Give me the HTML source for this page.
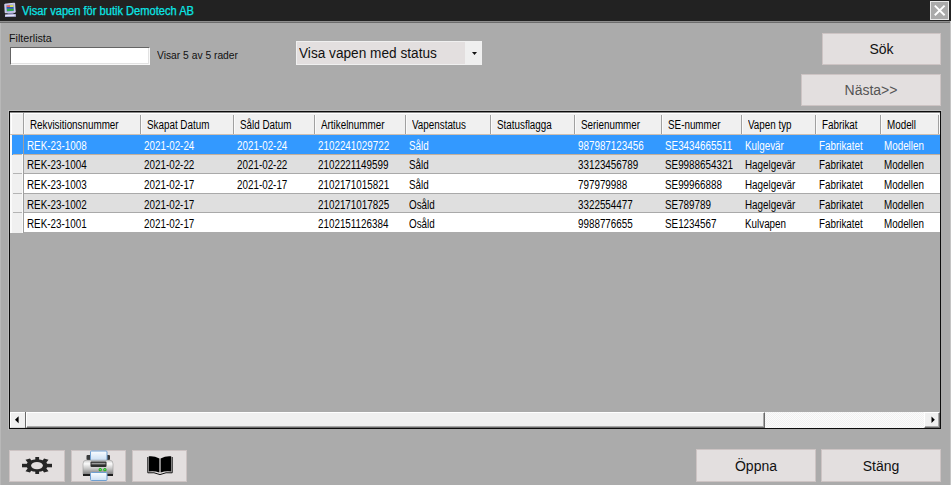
<!DOCTYPE html>
<html><head><meta charset="utf-8">
<style>
*{box-sizing:border-box;margin:0;padding:0}
html,body{width:951px;height:485px;overflow:hidden;background:#ababab;font-family:"Liberation Sans",sans-serif;position:relative}
.a{position:absolute}
.t{position:absolute;white-space:nowrap;transform-origin:0 0}
.lbl{font-size:11px;color:#111}
.btn{position:absolute;background:#e3dfdf;border:1px solid #cdc4c4}
.bt{position:absolute;left:0;width:100%;text-align:center;font-size:14px;color:#111;white-space:nowrap}
.c{position:absolute;white-space:nowrap;font-size:12px;color:#000;transform:scaleX(.82);transform-origin:0 0}
</style></head><body>

<div class="a" style="left:0;top:0;width:951px;height:21px;background:#222"></div>
<div class="a" style="left:0;top:21px;width:951px;height:1px;background:#8e8e8e"></div>
<div class="a" style="left:0;top:22px;width:951px;height:1px;background:#6c6c6c"></div>
<div class="a" style="left:0;top:23px;width:1px;height:462px;background:#b8b8b8"></div>
<div class="a" style="left:950px;top:21px;width:1px;height:464px;background:#c4c4c4"></div>
<svg class="a" style="left:0;top:0" width="22" height="20" viewBox="0 0 22 20">
<path d="M4.8 4.2 L14.6 3.2 L15.2 12.2 L5.2 12.8 Z" fill="#b4b4e6" stroke="#e6e6ff" stroke-width="0.9"/>
<clipPath id="scr"><path d="M6.6 5.6 L13.2 5 L13.7 10.8 L7 11.2 Z"/></clipPath>
<g clip-path="url(#scr)">
<rect x="5" y="4" width="10" height="8" fill="#49c"/>
<rect x="5" y="4" width="5" height="3" fill="#e65"/>
<rect x="10" y="4" width="5" height="3" fill="#dd5"/>
<rect x="5" y="7" width="10" height="1.8" fill="#35b"/>
<rect x="5" y="8.8" width="10" height="3" fill="#3a4"/>
</g>
<rect x="7.5" y="12.8" width="6" height="1.6" fill="#8080b0"/>
<path d="M5 14.4 L15.8 14 L16 16.8 L5 17 Z" fill="#b8b8e0"/>
<rect x="5.5" y="14.8" width="9" height="1" fill="#f0f0ff"/>
</svg>
<div class="t" style="left:22px;top:4px;font-size:12px;color:#0ae6e6;transform:scaleX(.925);-webkit-text-stroke:0.25px #0ae6e6">Visar vapen för butik Demotech AB</div>
<div class="a" style="left:930px;top:1px;width:19px;height:19px;border:1px solid #e8e8e8;background:#aaaaaa"></div>
<svg class="a" style="left:930px;top:1px" width="20" height="20"><path d="M4.8 4.6 L14.6 14.2 M14.6 4.6 L4.8 14.2" stroke="#fff" stroke-width="1.9"/></svg>
<div class="t lbl" style="left:9px;top:32px;font-size:11.5px;transform:scaleX(.93)">Filterlista</div>
<div class="a" style="left:10px;top:47px;width:140px;height:18px;background:#fff;border-top:1px solid #646464;border-left:1px solid #646464;border-right:1px solid #f8f8f8;border-bottom:1px solid #f8f8f8;box-shadow:inset -1px -1px 0 #e2e2e2"></div>
<div class="t lbl" style="left:157px;top:49px;transform:scaleX(.935)">Visar 5 av 5 rader</div>
<div class="a" style="left:296px;top:41px;width:186px;height:24px;background:#e3dfdf;border:1px solid #f0f0f0"></div>
<div class="a" style="left:465px;top:42px;width:16px;height:22px;background:#efefef"></div>
<div class="t" style="left:299px;top:45px;font-size:14px;color:#111;transform:scaleX(.975)">Visa vapen med status</div>
<svg class="a" style="left:472px;top:52px" width="6" height="4"><path d="M0 0 L5 0 L2.5 3 Z" fill="#111"/></svg>
<div class="btn" style="left:822px;top:33px;width:119px;height:32px"><div class="bt" style="top:7px">Sök</div></div>
<div class="btn" style="left:801px;top:74px;width:140px;height:32px"><div class="bt" style="top:7px;color:#555">Nästa&gt;&gt;</div></div>
<div class="a" style="left:9px;top:111px;width:932px;height:318px;border:1px solid #0c0c0c;background:#ababab"></div>
<div class="a" style="left:8px;top:110px;width:934px;height:1px;background:#bdbdbd"></div>
<div class="a" style="left:8px;top:110px;width:1px;height:320px;background:#bdbdbd"></div>
<div class="a" style="left:10px;top:112px;width:930px;height:22px;background:#f0f0f0"></div>
<div class="a" style="left:10px;top:112px;width:930px;height:1px;background:#8a8a8a"></div>
<div class="a" style="left:10px;top:113px;width:929px;height:1px;background:#ffffff"></div>
<div class="a" style="left:11px;top:113px;width:1px;height:21px;background:#ffffff"></div>
<div class="a" style="left:10px;top:134px;width:930px;height:1px;background:#cdbfb2"></div>
<div class="a" style="left:23px;top:113px;width:1px;height:21px;background:#a0a0a0"></div>
<div class="a" style="left:24px;top:113px;width:1px;height:21px;background:#fafafa"></div>
<div class="a" style="left:140px;top:115px;width:1px;height:19px;background:#a0a0a0"></div>
<div class="a" style="left:141px;top:115px;width:1px;height:19px;background:#fafafa"></div>
<div class="a" style="left:233px;top:115px;width:1px;height:19px;background:#a0a0a0"></div>
<div class="a" style="left:234px;top:115px;width:1px;height:19px;background:#fafafa"></div>
<div class="a" style="left:314px;top:115px;width:1px;height:19px;background:#a0a0a0"></div>
<div class="a" style="left:315px;top:115px;width:1px;height:19px;background:#fafafa"></div>
<div class="a" style="left:405px;top:115px;width:1px;height:19px;background:#a0a0a0"></div>
<div class="a" style="left:406px;top:115px;width:1px;height:19px;background:#fafafa"></div>
<div class="a" style="left:490px;top:115px;width:1px;height:19px;background:#a0a0a0"></div>
<div class="a" style="left:491px;top:115px;width:1px;height:19px;background:#fafafa"></div>
<div class="a" style="left:574px;top:115px;width:1px;height:19px;background:#a0a0a0"></div>
<div class="a" style="left:575px;top:115px;width:1px;height:19px;background:#fafafa"></div>
<div class="a" style="left:661px;top:115px;width:1px;height:19px;background:#a0a0a0"></div>
<div class="a" style="left:662px;top:115px;width:1px;height:19px;background:#fafafa"></div>
<div class="a" style="left:741px;top:115px;width:1px;height:19px;background:#a0a0a0"></div>
<div class="a" style="left:742px;top:115px;width:1px;height:19px;background:#fafafa"></div>
<div class="a" style="left:815px;top:115px;width:1px;height:19px;background:#a0a0a0"></div>
<div class="a" style="left:816px;top:115px;width:1px;height:19px;background:#fafafa"></div>
<div class="a" style="left:880px;top:115px;width:1px;height:19px;background:#a0a0a0"></div>
<div class="a" style="left:881px;top:115px;width:1px;height:19px;background:#fafafa"></div>
<div class="a" style="left:938px;top:115px;width:1px;height:19px;background:#a0a0a0"></div>
<div class="a" style="left:939px;top:115px;width:1px;height:19px;background:#fafafa"></div>
<div class="c" style="left:30px;top:118px">Rekvisitionsnummer</div>
<div class="c" style="left:147px;top:118px">Skapat Datum</div>
<div class="c" style="left:240px;top:118px">Såld Datum</div>
<div class="c" style="left:321px;top:118px">Artikelnummer</div>
<div class="c" style="left:412px;top:118px">Vapenstatus</div>
<div class="c" style="left:497px;top:118px">Statusflagga</div>
<div class="c" style="left:581px;top:118px">Serienummer</div>
<div class="c" style="left:668px;top:118px">SE-nummer</div>
<div class="c" style="left:748px;top:118px">Vapen typ</div>
<div class="c" style="left:822px;top:118px">Fabrikat</div>
<div class="c" style="left:887px;top:118px">Modell</div>
<div class="a" style="left:10px;top:135px;width:13px;height:20px;background:#fafafa"></div>
<div class="a" style="left:12px;top:135px;width:10px;height:20px;background:#3399ff"></div>
<div class="a" style="left:22px;top:135px;width:1px;height:19px;background:#3399ff"></div>
<div class="a" style="left:24px;top:135px;width:916px;height:19px;background:#3399ff"></div>
<div class="a" style="left:24px;top:154px;width:916px;height:1px;background:#c2b09e"></div>
<div class="a" style="left:13px;top:154px;width:9px;height:1px;background:#c8b8a8"></div>
<div class="a" style="left:23px;top:135px;width:1px;height:20px;background:#a0a0a0"></div>
<div class="c" style="left:27px;top:139px;color:#fff">REK-23-1008</div>
<div class="c" style="left:144px;top:139px;color:#fff">2021-02-24</div>
<div class="c" style="left:237px;top:139px;color:#fff">2021-02-24</div>
<div class="c" style="left:318px;top:139px;color:#fff">2102241029722</div>
<div class="c" style="left:409px;top:139px;color:#fff">Såld</div>
<div class="c" style="left:578px;top:139px;color:#fff">987987123456</div>
<div class="c" style="left:665px;top:139px;color:#fff">SE3434665511</div>
<div class="c" style="left:745px;top:139px;color:#fff">Kulgevär</div>
<div class="c" style="left:819px;top:139px;color:#fff">Fabrikatet</div>
<div class="c" style="left:884px;top:139px;color:#fff">Modellen</div>
<div class="a" style="left:10px;top:155px;width:13px;height:19px;background:#fafafa"></div>
<div class="a" style="left:12px;top:155px;width:10px;height:19px;background:#f0f0f0"></div>
<div class="a" style="left:24px;top:155px;width:916px;height:18px;background:#dfdfdf"></div>
<div class="a" style="left:24px;top:173px;width:916px;height:1px;background:#a9a9a9"></div>
<div class="a" style="left:13px;top:173px;width:9px;height:1px;background:#b4b4b4"></div>
<div class="a" style="left:23px;top:155px;width:1px;height:19px;background:#a0a0a0"></div>
<div class="c" style="left:27px;top:158px;color:#000">REK-23-1004</div>
<div class="c" style="left:144px;top:158px;color:#000">2021-02-22</div>
<div class="c" style="left:237px;top:158px;color:#000">2021-02-22</div>
<div class="c" style="left:318px;top:158px;color:#000">2102221149599</div>
<div class="c" style="left:409px;top:158px;color:#000">Såld</div>
<div class="c" style="left:578px;top:158px;color:#000">33123456789</div>
<div class="c" style="left:665px;top:158px;color:#000">SE9988654321</div>
<div class="c" style="left:745px;top:158px;color:#000">Hagelgevär</div>
<div class="c" style="left:819px;top:158px;color:#000">Fabrikatet</div>
<div class="c" style="left:884px;top:158px;color:#000">Modellen</div>
<div class="a" style="left:10px;top:174px;width:13px;height:20px;background:#fafafa"></div>
<div class="a" style="left:12px;top:174px;width:10px;height:20px;background:#f0f0f0"></div>
<div class="a" style="left:24px;top:174px;width:916px;height:19px;background:#ffffff"></div>
<div class="a" style="left:24px;top:193px;width:916px;height:1px;background:#a9a9a9"></div>
<div class="a" style="left:13px;top:193px;width:9px;height:1px;background:#b4b4b4"></div>
<div class="a" style="left:23px;top:174px;width:1px;height:20px;background:#a0a0a0"></div>
<div class="c" style="left:27px;top:178px;color:#000">REK-23-1003</div>
<div class="c" style="left:144px;top:178px;color:#000">2021-02-17</div>
<div class="c" style="left:237px;top:178px;color:#000">2021-02-17</div>
<div class="c" style="left:318px;top:178px;color:#000">2102171015821</div>
<div class="c" style="left:409px;top:178px;color:#000">Såld</div>
<div class="c" style="left:578px;top:178px;color:#000">797979988</div>
<div class="c" style="left:665px;top:178px;color:#000">SE99966888</div>
<div class="c" style="left:745px;top:178px;color:#000">Hagelgevär</div>
<div class="c" style="left:819px;top:178px;color:#000">Fabrikatet</div>
<div class="c" style="left:884px;top:178px;color:#000">Modellen</div>
<div class="a" style="left:10px;top:194px;width:13px;height:19px;background:#fafafa"></div>
<div class="a" style="left:12px;top:194px;width:10px;height:19px;background:#f0f0f0"></div>
<div class="a" style="left:24px;top:194px;width:916px;height:18px;background:#dfdfdf"></div>
<div class="a" style="left:24px;top:212px;width:916px;height:1px;background:#a9a9a9"></div>
<div class="a" style="left:13px;top:212px;width:9px;height:1px;background:#b4b4b4"></div>
<div class="a" style="left:23px;top:194px;width:1px;height:19px;background:#a0a0a0"></div>
<div class="c" style="left:27px;top:198px;color:#000">REK-23-1002</div>
<div class="c" style="left:144px;top:198px;color:#000">2021-02-17</div>
<div class="c" style="left:318px;top:198px;color:#000">2102171017825</div>
<div class="c" style="left:409px;top:198px;color:#000">Osåld</div>
<div class="c" style="left:578px;top:198px;color:#000">3322554477</div>
<div class="c" style="left:665px;top:198px;color:#000">SE789789</div>
<div class="c" style="left:745px;top:198px;color:#000">Hagelgevär</div>
<div class="c" style="left:819px;top:198px;color:#000">Fabrikatet</div>
<div class="c" style="left:884px;top:198px;color:#000">Modellen</div>
<div class="a" style="left:10px;top:213px;width:13px;height:20px;background:#fafafa"></div>
<div class="a" style="left:12px;top:213px;width:10px;height:20px;background:#f0f0f0"></div>
<div class="a" style="left:24px;top:213px;width:916px;height:19px;background:#ffffff"></div>
<div class="a" style="left:23px;top:213px;width:1px;height:20px;background:#a0a0a0"></div>
<div class="c" style="left:27px;top:217px;color:#000">REK-23-1001</div>
<div class="c" style="left:144px;top:217px;color:#000">2021-02-17</div>
<div class="c" style="left:318px;top:217px;color:#000">2102151126384</div>
<div class="c" style="left:409px;top:217px;color:#000">Osåld</div>
<div class="c" style="left:578px;top:217px;color:#000">9988776655</div>
<div class="c" style="left:665px;top:217px;color:#000">SE1234567</div>
<div class="c" style="left:745px;top:217px;color:#000">Kulvapen</div>
<div class="c" style="left:819px;top:217px;color:#000">Fabrikatet</div>
<div class="c" style="left:884px;top:217px;color:#000">Modellen</div>
<div class="a" style="left:10px;top:412px;width:930px;height:16px;background:repeating-conic-gradient(#fbfbfb 0 25%, #f1f1f1 0 50%) 0 0/2px 2px"></div>
<div class="a" style="left:10px;top:412px;width:16px;height:16px;background:#f0f0f0;border-top:1px solid #fff;border-left:1px solid #fff;border-bottom:1px solid #dadada"></div>
<div class="a" style="left:25px;top:412px;width:1px;height:16px;background:#6a6a6a"></div>
<svg class="a" style="left:14px;top:416px" width="6" height="8"><path d="M4.6 0.3 L4.6 7.3 L1 3.8 Z" fill="#000"/></svg>
<div class="a" style="left:26px;top:412px;width:739px;height:16px;background:#f0f0f0;border-top:1px solid #fff;border-left:1px solid #fff;border-right:1px solid #6a6a6a;border-bottom:1px solid #6a6a6a;box-shadow:inset -1px -1px 0 #a9a9a9"></div>
<div class="a" style="left:924px;top:412px;width:16px;height:16px;background:#f0f0f0;border-top:1px solid #fff;border-left:1px solid #fff;border-right:1px solid #6a6a6a;border-bottom:1px solid #6a6a6a;box-shadow:inset -1px -1px 0 #a9a9a9"></div>
<svg class="a" style="left:931px;top:416px" width="5" height="8"><path d="M0.5 0.5 L0.5 7 L3.8 3.75 Z" fill="#000"/></svg>
<div class="btn" style="left:9px;top:450px;width:56px;height:32px"></div>
<div class="btn" style="left:71px;top:450px;width:55px;height:32px"></div>
<div class="btn" style="left:132px;top:450px;width:55px;height:32px"></div>
<div class="btn" style="left:696px;top:449px;width:120px;height:33px"><div class="bt" style="top:8px">Öppna</div></div>
<div class="btn" style="left:821px;top:449px;width:120px;height:33px"><div class="bt" style="top:8px">Stäng</div></div>
<svg class="a" style="left:0;top:440px" width="70" height="45" viewBox="0 440 70 45">
<g fill="#262626">
<ellipse cx="37" cy="465.5" rx="10.6" ry="6.3"/>
<rect x="35.3" y="457" width="3.8" height="4"/>
<rect x="35.3" y="470" width="3.8" height="4"/>
<rect x="22" y="463.8" width="5" height="3.5"/>
<rect x="47" y="463.8" width="5" height="3.5"/>
<path d="M25.5 459.8 L30 458.6 L32 461.5 L28 463 Z"/>
<path d="M48.5 459.8 L44 458.6 L42 461.5 L46 463 Z"/>
<path d="M25.5 471.2 L30 472.4 L32 469.5 L28 468 Z"/>
<path d="M48.5 471.2 L44 472.4 L42 469.5 L46 468 Z"/>
</g>
<ellipse cx="37" cy="465.6" rx="5.9" ry="3.7" fill="#e3dfdf"/>
</svg>
<svg class="a" style="left:70px;top:440px" width="60" height="45" viewBox="70 440 60 45">
<defs>
<linearGradient id="pap" x1="0" y1="0" x2="0" y2="1"><stop offset="0" stop-color="#fbfdff"/><stop offset="1" stop-color="#c9def3"/></linearGradient>
<linearGradient id="body" x1="0" y1="0" x2="0" y2="1"><stop offset="0" stop-color="#d0d0d0"/><stop offset="0.25" stop-color="#fafafa"/><stop offset="0.6" stop-color="#c4c4c4"/><stop offset="1" stop-color="#7a7a7a"/></linearGradient>
</defs>
<rect x="86.5" y="455" width="23.5" height="5" rx="1" fill="#3a3a3a"/>
<rect x="90.5" y="451" width="16.5" height="9.5" rx="1" fill="url(#pap)" stroke="#6fa0d2" stroke-width="1"/>
<path d="M86 460.2 L110 460.2 Q113 460.2 113 464 L113 474.5 L83 474.5 L83 464 Q83 460.2 86 460.2 Z" fill="url(#body)" stroke="#9a9a9a" stroke-width="0.6"/>
<rect x="83" y="474" width="8" height="2" fill="#1e1e1e"/><rect x="106" y="474" width="7" height="2" fill="#1e1e1e"/>
<rect x="90.5" y="461.5" width="16" height="5.5" rx="1" fill="#2e2e2e"/>
<rect x="91.5" y="462.8" width="14" height="1.6" fill="#9a9a9a"/>
<circle cx="100.2" cy="469.7" r="1.6" fill="#1aa01a"/><circle cx="100.2" cy="469.7" r="0.8" fill="#6f6"/>
<circle cx="104.9" cy="469.7" r="1.6" fill="#1aa01a"/><circle cx="104.9" cy="469.7" r="0.8" fill="#6f6"/>
<rect x="90.5" y="472.5" width="16.5" height="8" rx="1" fill="url(#pap)" stroke="#6fa0d2" stroke-width="1"/>
</svg>
<svg class="a" style="left:130px;top:440px" width="60" height="45" viewBox="130 440 60 45">
<path d="M147.8 457 L147.8 472.8 Q154 471.8 160 474.6 Q166 471.8 172.2 472.8 L172.2 457" fill="none" stroke="#111" stroke-width="1"/>
<path d="M148.8 456.3 Q154 455.6 159.4 458.4 L159.4 472.6 Q154 470.6 148.8 471.6 Z" fill="#000"/>
<path d="M171.2 456.3 Q166 455.6 160.6 458.4 L160.6 472.6 Q166 470.6 171.2 471.6 Z" fill="#000"/>
</svg>
</body></html>
